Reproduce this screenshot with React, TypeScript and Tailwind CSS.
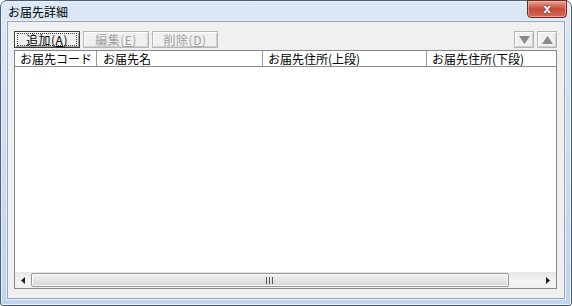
import React from "react";

const jp = { fontFamily: '"Noto Sans CJK JP", "MS UI Gothic", sans-serif' };

function Btn({ label, k, disabled, def }: { label: string; k: string; disabled?: boolean; def?: boolean }) {
  return (
    <div
      className={
        "h-[17px] w-[66px] flex items-center justify-center text-[12px] leading-none bg-[#f0f0f0] " +
        (def
          ? "border border-[#3c3c3c] shadow-[inset_1px_1px_0_#fff,inset_-1px_-1px_0_#a0a0a0]"
          : "border border-[#b5b5b5] shadow-[inset_1px_1px_0_#fff,inset_-1px_-1px_0_#cfcfcf]")
      }
    >
      <div
        className={
          "h-[13px] w-[60px] flex items-center justify-center " +
          (def ? "outline outline-1 outline-dotted outline-[#444] -outline-offset-1 text-black" : "text-[#a0a0a0]")
        }
      >
        <span className="tracking-[0.5px]">
          {label}(<u>{k}</u>)
        </span>
      </div>
    </div>
  );
}

function ArrowBtn({ up }: { up?: boolean }) {
  return (
    <div className="h-[17px] w-[20px] flex items-center justify-center bg-[#f0f0f0] border border-[#b5b5b5] shadow-[inset_1px_1px_0_#fff,inset_-1px_-1px_0_#cfcfcf]">
      <svg width="11" height="8" viewBox="0 0 11 8">
        {up ? <polygon points="0,8 11,8 5.5,0" fill="#8a8a8a" /> : <polygon points="0,0 11,0 5.5,8" fill="#8a8a8a" />}
      </svg>
    </div>
  );
}

export default function App() {
  const cols = [
    { t: "お届先コード", w: 82, pl: 5 },
    { t: "お届先名", w: 166, pl: 6 },
    { t: "お届先住所(上段)", w: 164, pl: 5 },
    { t: "お届先住所(下段)", w: 200, pl: 5 },
  ];
  return (
    <div className="w-[572px] h-[306px] bg-white overflow-hidden" style={jp}>
      <div className="relative w-full h-full rounded-t-[7px] rounded-b-[3px] border border-[#4f5f73] bg-gradient-to-b from-[#dce8f6] via-[#cddcf0] to-[#c0d4ec] flex flex-col shadow-[inset_0_0_0_1px_#e9f1fa]">
        <div className="h-[20px] shrink-0 pl-[7px] pt-[4px] text-[12px] leading-[14px] text-black">お届先詳細</div>
        <div className="absolute right-[4px] top-[-1px] w-[40px] h-[18px] rounded-b-[4px] border border-[#6b2a22] bg-gradient-to-b from-[#e5a294] via-[#c8493a] to-[#d36a58] flex items-center justify-center shadow-[inset_0_0_0_1px_rgba(255,210,200,0.5)]">
          <span className="text-white text-[12px] font-bold leading-none [text-shadow:0_0_2px_#600]" style={{ fontFamily: '"DejaVu Sans", sans-serif' }}>
            x
          </span>
        </div>
        <div className="flex-1 px-[6px] pb-[6px] flex flex-col">
          <div className="flex-1 border border-[#91a5bd] bg-[#f0f0f0] flex flex-col pl-[6px] pr-[7px] pt-[9px] pb-[9px] shadow-[0_0_0_1px_#e8f0f9]">
            <div className="flex items-center h-[17px]">
              <div className="flex gap-[3px]">
                <Btn label="追加" k="A" def />
                <Btn label="編集" k="E" disabled />
                <Btn label="削除" k="D" disabled />
              </div>
              <div className="ml-auto flex gap-[3px]">
                <ArrowBtn />
                <ArrowBtn up />
              </div>
            </div>
            <div className="mt-[2px] flex-1 border border-[#828790] bg-white flex flex-col overflow-hidden">
              <div className="h-[16px] shrink-0 flex border-b border-[#8c8c8c] overflow-hidden text-[12px] leading-[15px] text-black">
                {cols.map((c, i) => (
                  <div
                    key={i}
                    className={"shrink-0 h-full whitespace-nowrap " + (i < 3 ? "border-r border-[#9a9a9a]" : "")}
                    style={{ width: c.w, paddingLeft: c.pl }}
                  >
                    {c.t}
                  </div>
                ))}
              </div>
              <div className="flex-1" />
              <div className="h-[16px] shrink-0 flex bg-gradient-to-b from-[#e6e6e6] via-[#f4f4f4] to-[#f0f0f0]">
                <div className="w-[16px] flex items-center justify-center">
                  <svg width="4" height="7" viewBox="0 0 4 7">
                    <polygon points="4,0 4,7 0,3.5" fill="#202020" />
                  </svg>
                </div>
                <div className="w-[478px] my-[1px] rounded-[2px] border border-[#979797] bg-gradient-to-b from-[#f2f2f2] via-[#e6e6e6] to-[#d4d4d4] flex items-center justify-center shadow-[inset_0_0_0_1px_#fafafa]">
                  <svg width="8" height="7" viewBox="0 0 8 7">
                    <rect x="0" y="0" width="1" height="7" fill="#555" />
                    <rect x="3" y="0" width="1" height="7" fill="#555" />
                    <rect x="6" y="0" width="1" height="7" fill="#555" />
                  </svg>
                </div>
                <div className="flex-1" />
                <div className="w-[16px] flex items-center justify-center">
                  <svg width="4" height="7" viewBox="0 0 4 7">
                    <polygon points="0,0 0,7 4,3.5" fill="#202020" />
                  </svg>
                </div>
              </div>
            </div>
          </div>
        </div>
      </div>
    </div>
  );
}
